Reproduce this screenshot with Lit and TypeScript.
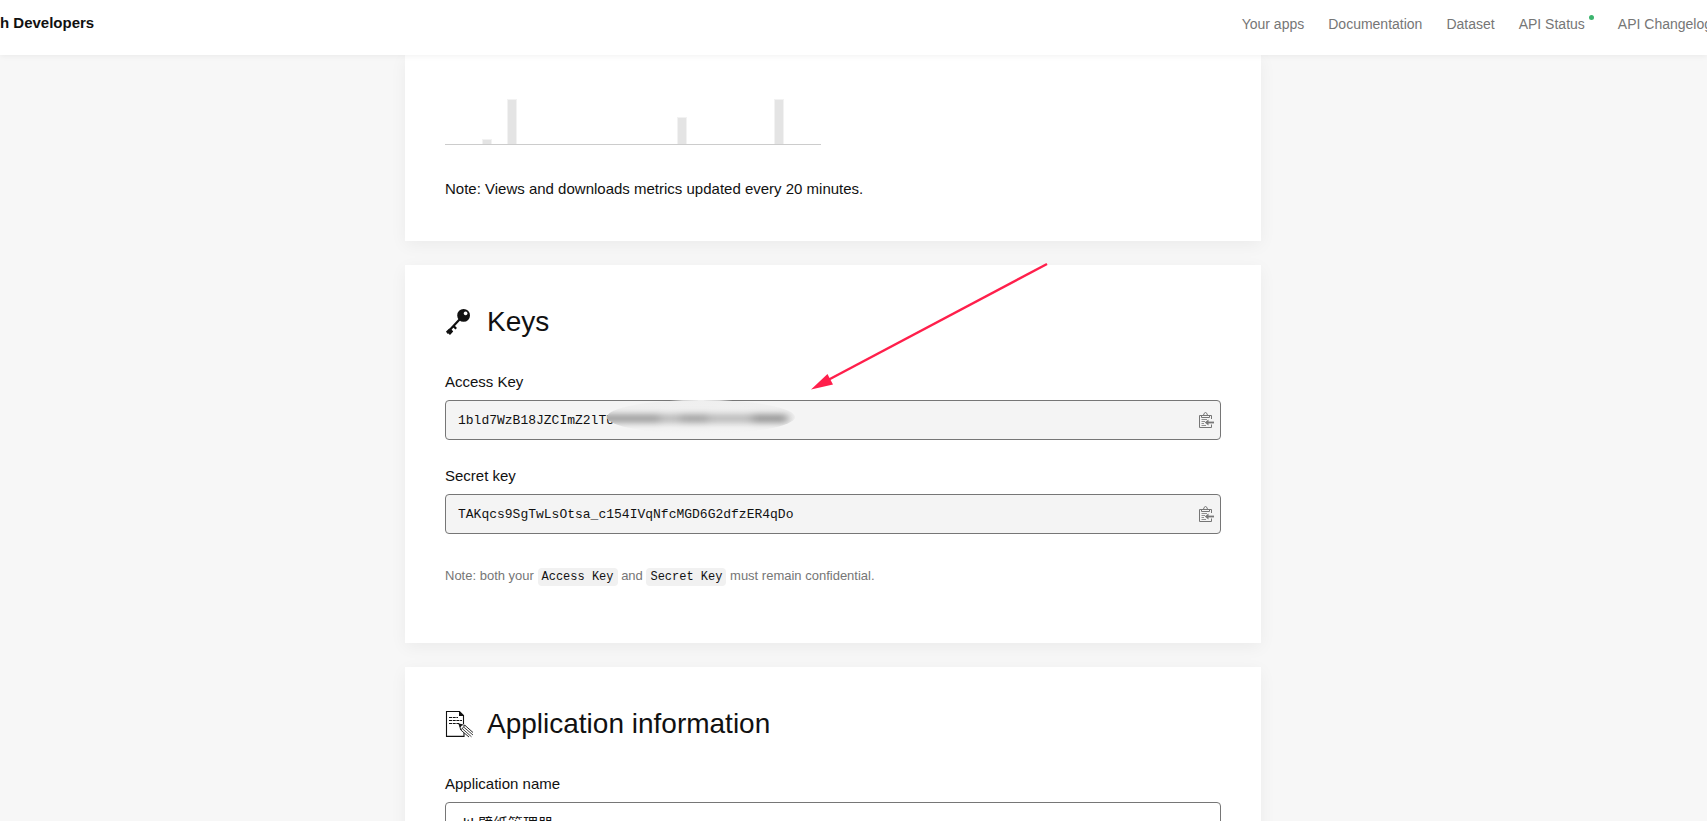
import { LitElement, html, svg, css } from "lit";
import { customElement, property } from "lit/decorators.js";

interface Bar { x: number; height: number; }

const BARS: Bar[] = [
  { x: 37, height: 5 },
  { x: 62, height: 45 },
  { x: 232, height: 27 },
  { x: 329, height: 45 },
];

const keyIcon = html`
  <svg class="icon" width="28" height="28" viewBox="0 0 28 28" aria-hidden="true">
    <path fill="#111" fill-rule="evenodd" d="M18.600 1a6.400 6.400 0 1 1 0 12.800a6.400 6.400 0 1 1 0-12.800zM20.600 3.500a1.900 1.900 0 1 0 .01 0z"/>
    <path stroke="#111" stroke-width="2.200" fill="none" d="M14.500 11.500L4 22.800M8.800 18.400L11.200 20.800"/>
    <path fill="#111" d="M1 23.600L4 20.800L5.600 20.400L7 22L8.200 23.600L5 27L3.400 25.600L2.400 25.800z"/>
  </svg>`;

const noteIcon = html`
  <svg class="icon" width="28" height="28" viewBox="0 0 28 28" aria-hidden="true">
    <path fill="none" stroke="#111" stroke-width="1.100" d="M19 21.500V26.400H1.500V1.500H14.500L18.500 5.500V14"/>
    <path fill="#111" d="M14 1l5 5h-5z"/>
    <path stroke="#111" stroke-width="1.100" stroke-dasharray="3 .7" d="M4 7.500h9M4 10.500h13M4 13.500h10"/>
    <path fill="#fff" stroke="#111" stroke-width=".9" d="M24 27L15.800 20L14 14L20 15.400L28 22.500"/>
    <path fill="none" stroke="#111" stroke-width=".8" d="M15.800 20L20 15.400M17.200 18.500L26.500 26.800M18.600 17L28 25"/>
    <path fill="#111" d="M13.500 13.500L17.500 14.800L15.200 17.400z"/>
  </svg>`;

const copyIcon = html`
  <svg width="18" height="18" viewBox="0 0 18 18" aria-hidden="true">
    <g fill="none" stroke="#767676">
      <path stroke-width="1" d="M14.500 8V4.500H2.500V16.500H14.500V13.500"/>
      <path stroke-width="1" d="M4.500 6.500V4.500H6.500L7 2.500L8.500 1.500L10 2.500L10.500 4.500H12.500V6.500z"/>
      <path stroke-width=".8" d="M4.500 8.500H10M4.500 10.500H8M4.500 12.500H7M4.500 14.500H9"/>
      <path stroke-width="1.800" d="M10 11.500H17"/>
    </g>
    <path fill="#767676" d="M7.800 11.500L11.500 8.600V14.400z"/>
  </svg>`;

@customElement("usage-chart")
export class UsageChart extends LitElement {
  static styles = css`
    :host { display: block; line-height: 0; }
  `;
  render() {
    return html`
      <svg width="376" height="46" viewBox="0 0 376 46" role="img" aria-label="Requests">
        ${BARS.map((b) => svg`
          <rect x=${b.x} y=${45 - b.height} width="10" height=${b.height} fill="#f2f2f2"></rect>
          <rect x=${b.x + 1} y=${46 - b.height} width="8" height=${b.height - 1} fill="#e4e4e4"></rect>`)}
        <rect y="45" width="376" height="1" fill="#ccc"></rect>
      </svg>`;
  }
}

@customElement("key-field")
export class KeyField extends LitElement {
  @property() label = "";
  @property() value = "";
  @property({ type: Boolean }) masked = false;
  @property({ type: Boolean }) editable = false;

  static styles = css`
    :host { display: block; }
    .label { display: block; margin-bottom: 6px; font-size: 15px; line-height: 24px; }
    .box { position: relative; }
    .input {
      display: block; box-sizing: border-box; width: 100%; height: 40px; margin: 0;
      padding: 0 48px 0 12px; border: 1px solid #767676; border-radius: 4px;
      background: #f4f4f4; color: #111; outline: none;
      font: 13px "Liberation Mono", monospace;
    }
    .editable { background: #fff; padding-right: 12px; font: 15px "Liberation Sans", "Noto Sans CJK SC", sans-serif; }
    .copy {
      position: absolute; top: 0; right: 0; width: 30px; height: 40px; padding: 0;
      display: flex; align-items: center; justify-content: center;
      border: 0; background: none; cursor: pointer;
    }
    .mask { position: absolute; left: 161px; top: 0; pointer-events: none; }
  `;

  render() {
    return html`
      <label class="label" for="field">${this.label}</label>
      <div class="box">
        <input id="field" class="input ${this.editable ? "editable" : ""}" type="text"
          .value=${this.value} ?readonly=${!this.editable}>
        ${this.masked ? html`
          <svg class="mask" width="190" height="36" viewBox="0 0 190 36" aria-hidden="true">
            <defs>
              <clipPath id="oval"><ellipse cx="95" cy="17" rx="94" ry="17"/></clipPath>
              <filter id="soft" x="-20%" y="-100%" width="140%" height="300%"><feGaussianBlur stdDeviation="5 3"/></filter>
              <linearGradient id="base" x1="0" y1="0" x2="0" y2="1">
                <stop offset="0" stop-color="#efefef"/><stop offset="1" stop-color="#f4f4f4"/>
              </linearGradient>
            </defs>
            <g clip-path="url(#oval)">
              <rect width="190" height="36" fill="url(#base)"/>
              <g filter="url(#soft)">
                <rect x="-8" y="14" width="62" height="9" fill="#a0a0a0"/>
                <rect x="54" y="14" width="128" height="9" fill="#bcbcbc"/>
                <rect x="74" y="14" width="28" height="9" fill="#a4a4a4"/>
                <rect x="146" y="14" width="36" height="9" fill="#989898"/>
              </g>
            </g>
          </svg>` : ""}
        ${this.editable ? "" : html`
          <button class="copy" type="button" aria-label="Copy">${copyIcon}</button>`}
      </div>`;
  }
}

@customElement("app-root")
export class AppRoot extends LitElement {
  static styles = css`
    :host {
      display: block; height: 100vh; overflow: hidden; background: #f7f7f7; color: #111;
      font: 15px/24px "Liberation Sans", "Noto Sans CJK SC", sans-serif;
    }
    .header {
      position: relative; z-index: 1; display: flex; justify-content: space-between;
      align-items: flex-start; box-sizing: border-box; height: 55px; padding-top: 11px;
      background: #fff; box-shadow: 0 1px 6px rgba(0, 0, 0, 0.06);
    }
    .brand { color: #111; font-weight: 700; text-decoration: none; }
    .nav { display: flex; gap: 24px; margin-right: -5px; padding-top: 1px; font-size: 14px; white-space: nowrap; }
    .link { position: relative; color: #767676; text-decoration: none; }
    .status { padding-right: 9px; }
    .dot {
      position: absolute; top: 3px; right: 0; width: 5px; height: 5px;
      border-radius: 50%; background: #3cb46e;
    }
    .main { display: flex; flex-direction: column; align-items: center; gap: 24px; padding-right: 41px; }
    .card {
      position: relative; box-sizing: border-box; width: 100%; max-width: 856px; padding: 40px;
      background: #fff; box-shadow: 0 4px 16px rgba(0, 0, 0, 0.05);
    }
    .metrics { padding-top: 44px; }
    .text { margin: 32px 0 0; }
    .title {
      display: flex; align-items: center; gap: 14px; margin: 0 0 31px;
      font-size: 28px; font-weight: 400; line-height: 34px;
    }
    .fields { display: grid; gap: 24px; }
    .note { margin: 32px 0 17px; color: #767676; font-size: 13px; line-height: 20px; }
    .code {
      padding: 2px 4px; border-radius: 4px; background: #f1f1f1; color: #111;
      font: 12px "Liberation Mono", monospace;
    }
    .arrow { position: absolute; left: 404px; top: -4px; pointer-events: none; }
  `;

  render() {
    return html`
      <header class="header">
        <a class="brand" href="#">h Developers</a>
        <nav class="nav">
          <a class="link" href="#">Your apps</a>
          <a class="link" href="#">Documentation</a>
          <a class="link" href="#">Dataset</a>
          <a class="link status" href="#">API Status<span class="dot"></span></a>
          <a class="link" href="#">API Changelog</a>
        </nav>
      </header>
      <main class="main">
        <section class="card metrics">
          <usage-chart></usage-chart>
          <p class="text">Note: Views and downloads metrics updated every 20 minutes.</p>
        </section>
        <section class="card">
          <h2 class="title">${keyIcon}Keys</h2>
          <div class="fields">
            <key-field label="Access Key" value="1bld7WzB18JZCImZ2lTU" masked></key-field>
            <key-field label="Secret key" value="TAKqcs9SgTwLsOtsa_c154IVqNfcMGD6G2dfzER4qDo"></key-field>
          </div>
          <p class="note">Note: both your <code class="code">Access Key</code> and <code class="code">Secret Key</code> must remain confidential.</p>
          <svg class="arrow" width="242" height="132" viewBox="0 0 242 132" aria-hidden="true">
            <path stroke="#ff1f4b" stroke-width="2.500" d="M238 3L20 118.500"/>
            <path fill="#ff1f4b" d="M2 128.500L18.500 113L20.500 117L24 123.500z"/>
          </svg>
        </section>
        <section class="card">
          <h2 class="title">${noteIcon}Application information</h2>
          <key-field label="Application name" value="dtk壁纸管理器" editable></key-field>
        </section>
      </main>`;
  }
}
